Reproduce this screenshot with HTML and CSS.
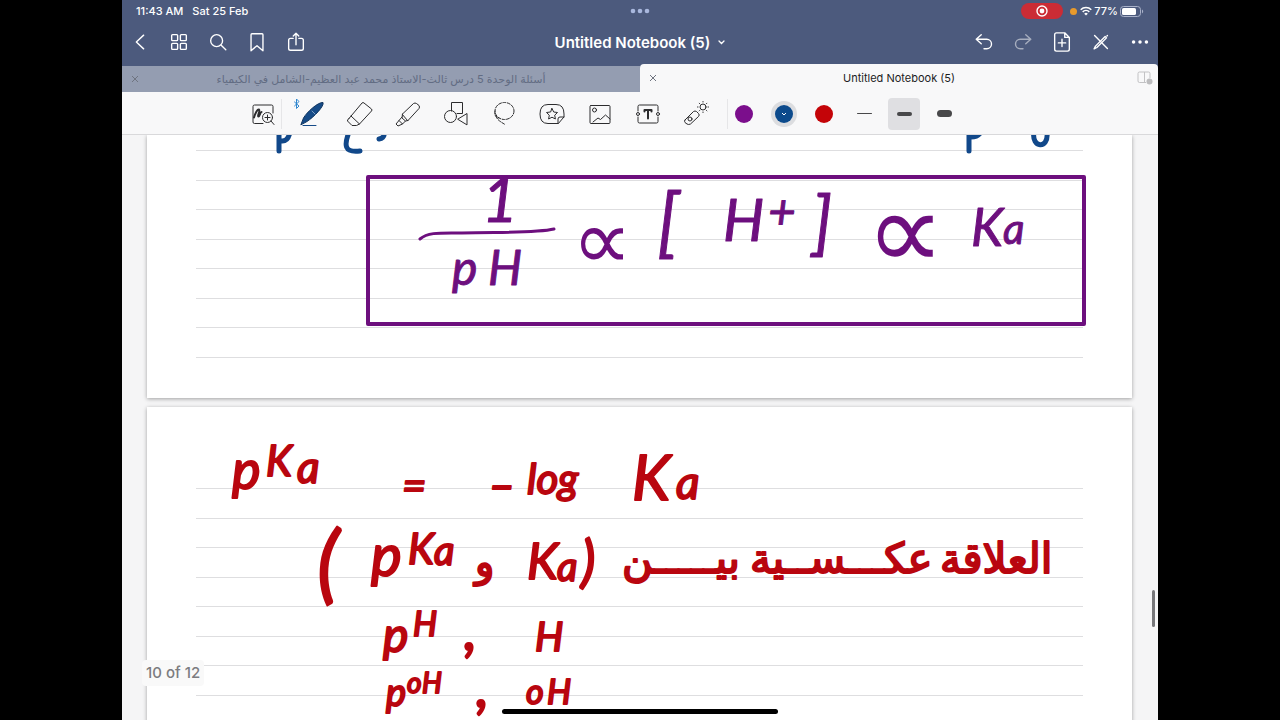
FILE: index.html
```html
<!DOCTYPE html>
<html lang="en">
<head>
  <meta charset="utf-8">
  <title>Untitled Notebook (5)</title>
  <link rel="stylesheet" href="styles.css">
</head>
<body>
  <div class="app">
    <header class="header">
      <div class="status-bar">
        <div class="status-left"><span>11:43 AM</span><span>Sat 25 Feb</span></div>
        <svg class="multitask" width="20" height="6" viewBox="0 0 20 6"><circle cx="3" cy="3" r="2.300"/><circle cx="10" cy="3" r="2.300"/><circle cx="17" cy="3" r="2.300"/></svg>
        <div class="status-right">
          <span class="recording">
            <svg width="12" height="12" viewBox="0 0 12 12"><circle cx="6" cy="6" r="5" fill="none" stroke="#fff" stroke-width="1.4"/><circle cx="6" cy="6" r="2.4" fill="#fff"/></svg>
          </span>
          <span class="mic-dot"></span>
          <svg width="12" height="10" viewBox="0 0 12 10" fill="none" stroke="#fff" stroke-width="1.6"><path d="M.7 3.7a7.6 7.6 0 0 1 10.6 0M2.7 5.8a4.8 4.8 0 0 1 6.6 0"/><path d="M6 9.6 4.2 7.7a2.6 2.6 0 0 1 3.6 0z" fill="#fff" stroke="none"/></svg>
          <span>77%</span>
          <svg width="24" height="11" viewBox="0 0 24 11"><rect x=".5" y=".5" width="20" height="10" rx="3" fill="none" stroke="#a9b1c9"/><rect x="2" y="2" width="14" height="7" rx="1.6" fill="#fff"/><path d="M22 3.6c1.6.6 1.6 3.2 0 3.8z" fill="#a9b1c9"/></svg>
        </div>
      </div>

      <nav class="nav-bar">
        <div class="nav-group">
          <button class="nav-button" aria-label="Back"><svg class="icon" viewBox="0 0 24 24"><path d="m16 4.500-8 7.500 8 7.500"/></svg></button>
          <button class="nav-button" aria-label="Thumbnails"><svg class="icon" viewBox="0 0 24 24"><rect x="4" y="4" width="6.500" height="6.500" rx="1"/><rect x="13.500" y="4" width="6.500" height="6.500" rx="1"/><rect x="4" y="13.500" width="6.500" height="6.500" rx="1"/><rect x="13.500" y="13.500" width="6.500" height="6.500" rx="1"/></svg></button>
          <button class="nav-button" aria-label="Search"><svg class="icon" viewBox="0 0 24 24"><circle cx="10.500" cy="10.500" r="6.500"/><path d="m15.500 15.500 5 5"/></svg></button>
          <button class="nav-button" aria-label="Bookmark"><svg class="icon" viewBox="0 0 24 24"><path d="M5.500 4q0-1 1-1h11q1 0 1 1v17.500L12 16l-6.500 5.500z"/></svg></button>
          <button class="nav-button" aria-label="Share"><svg class="icon" viewBox="0 0 24 24"><path d="M9 8H6Q4 8 4 10v9q0 2 2 2h12q2 0 2-2v-9q0-2-2-2h-3M12 15V2.500M9 5.500l3-3 3 3"/></svg></button>
        </div>
        <button class="doc-title">Untitled Notebook (5)
          <svg width="7" height="5" viewBox="0 0 7 5" fill="none" stroke="#fff" stroke-width="1.3" stroke-linecap="round"><path d="m1 1 2.500 2.500L6 1"/></svg>
        </button>
        <div class="nav-group nav-group-right">
          <button class="nav-button" aria-label="Undo"><svg class="icon" viewBox="0 0 24 24"><path d="m9 4-5.500 5L9 14M3.500 9H15a5.200 5.200 0 0 1 0 10.400h-3"/></svg></button>
          <button class="nav-button" aria-label="Redo" disabled><svg class="icon" viewBox="0 0 24 24"><path d="m15 4 5.500 5L15 14M20.500 9H9a5.200 5.200 0 0 0 0 10.400h3"/></svg></button>
          <button class="nav-button" aria-label="Add page"><svg class="icon" viewBox="0 0 24 24"><path d="M6 2h9l5 5v13q0 2-2 2H6q-2 0-2-2V4q0-2 2-2zM15 2v5h5M12 9v8M8 13h8"/></svg></button>
          <button class="nav-button" aria-label="Read only mode"><svg class="icon" viewBox="0 0 24 24"><path d="m5 5 14 14"/><path d="m4.500 19.500 1.500-3L16.500 6l1.500 1.500L7.500 18zM18.500 5.500l.5-.5"/></svg></button>
          <button class="nav-button" aria-label="More"><svg class="icon icon-solid" viewBox="0 0 24 24"><circle cx="5" cy="12" r="1.900"/><circle cx="12" cy="12" r="1.900"/><circle cx="19" cy="12" r="1.900"/></svg></button>
        </div>
      </nav>

      <div class="tabs">
        <div class="tab">
          <button class="tab-close" aria-label="Close tab"><svg width="8" height="8" viewBox="0 0 8 8"><path d="m1 1 6 6M7 1 1 7"/></svg></button>
          <a class="tab-title" href="#" dir="rtl" lang="ar">أسئلة الوحدة 5 درس ثالث-الاستاذ محمد عبد العظيم-الشامل في الكيمياء</a>
        </div>
        <div class="tab tab-active">
          <button class="tab-close" aria-label="Close tab"><svg width="8" height="8" viewBox="0 0 8 8"><path d="m1 1 6 6M7 1 1 7"/></svg></button>
          <a class="tab-title" href="#">Untitled Notebook (5)</a>
          <button class="tab-split" aria-label="Split view"><svg width="16" height="14" viewBox="0 0 16 14" fill="none" stroke="#c2c2c4"><path d="M9 11.500H2.500q-1.500 0-1.500-1.500V2.500Q1 1 2.500 1h9Q13 1 13 2.500V7M7.500 1v10.500"/><circle cx="12.500" cy="10.500" r="3" fill="#bcbcbe" stroke="none"/></svg></button>
        </div>
      </div>
    </header>

    <div class="toolbar">
      <button class="tool tool-zoom" aria-label="Zoom window"><svg class="tool-icon" viewBox="0 0 28 28"><path d="M14 23.500H5.500Q4 23.500 4 22V6.500Q4 5 5.500 5h17Q24 5 24 6.500V13"/><path class="thick" d="M5 17.500c1.500-5 3.500-8.500 5-8 1.500 1-2 7-.5 7S11 12 12.500 12"/><circle cx="18.500" cy="17.500" r="5"/><path d="m22 21 3 3.500M18.500 15v5M16 17.500h5"/></svg></button>
      <span class="divider"></span>
      <button class="tool tool-pen" aria-label="Pen"><svg class="tool-icon" viewBox="0 0 28 28"><path class="bluetooth" d="m-3.500 2 4.500 4-2.500 2.500V-1L1 1.500-3.500 6"/><path d="M3 24.500 5.500 18C9 12 20 2 25 2.500 26.500 6 16 17 9 21.500z" fill="#164b88" stroke="#10355f"/><path d="m14 11 3 3" stroke="#7d9ec4"/><path d="M5 25.500h13" stroke="#164b88"/></svg></button>
      <button class="tool" aria-label="Eraser"><svg class="tool-icon" viewBox="0 0 28 28"><path d="M3 18.500 16 3q1-1 2 0l7.500 6q1 1 0 2L13.500 24l-3 1.500H6L1.500 21q-.5-1.500 1.500-2.500zM5 16l8.500 8"/></svg></button>
      <button class="tool" aria-label="Highlighter"><svg class="tool-icon" viewBox="0 0 28 28"><path d="M8.500 14 19.500 3.500q1.500-1 3 0l2.500 2q1 1.500 0 3L14 20.500zM8.500 14l-.5 4 3.500 3 2.500-.5M8 17l-3 3.500L8.500 24l3-3M5 20.500l-3 3.500 2 2 4.500-2"/></svg></button>
      <button class="tool" aria-label="Shapes"><svg class="tool-icon" viewBox="0 0 28 28"><path d="M9.500 11V2.500h11v11H15"/><circle cx="8.500" cy="16.500" r="6"/><path d="m16 19 9-5.500v11z"/></svg></button>
      <button class="tool" aria-label="Lasso"><svg class="tool-icon" viewBox="0 0 28 28"><ellipse cx="14.500" cy="11" rx="9.500" ry="8.500" stroke-dasharray="3 1.500"/><path stroke-dasharray="3 1.500" d="M5 11c-1 4 1 7 4 7M6 16c1 4 5 6 9 8.500"/></svg></button>
      <button class="tool" aria-label="Elements"><svg class="tool-icon" viewBox="0 0 28 28"><path d="M20 23.500H10q-8 0-8-9.500t8-9.500h8q8 0 8 9.500v2.500zM20 23.500V19q0-2 2-2h4"/><path d="m14 8.500 1.700 3.500 3.800.5-2.800 2.700.7 3.800-3.400-1.800-3.400 1.800.7-3.800-2.800-2.700 3.800-.5z"/></svg></button>
      <button class="tool" aria-label="Image"><svg class="tool-icon" viewBox="0 0 28 28"><rect x="4" y="5.500" width="20" height="18" rx="1"/><circle cx="8.500" cy="10" r="2"/><path d="m7 22 5-4 2.500 1.500 5-4.500 4.500 4"/></svg></button>
      <button class="tool" aria-label="Text"><svg class="tool-icon" viewBox="0 0 28 28"><path d="M4 11V6.500Q4 5 5.500 5h17Q24 5 24 6.500V11M24 17v4.500q0 1.500-1.500 1.500h-17Q4 23 4 21.500V17"/><circle cx="4" cy="14" r="1.500"/><circle cx="24" cy="14" r="1.500"/><path class="thick" d="M10.500 11.500V10h7v1.500M14 10v8.500"/></svg></button>
      <button class="tool" aria-label="Laser pointer"><svg class="tool-icon" viewBox="0 0 28 28"><path d="m3 20 8.500-8.500q1.500-1 3 0l2 2q1.500 1.500 0 3L8.500 24q-2 1-3.500 0l-2-1.500q-1-1 0-2.500z"/><circle cx="8" cy="19" r="2"/><circle cx="21" cy="7" r="3"/><path d="M21 1.500v.5M21 12v.5M15.500 7h.5M26 7h.5M17.200 3.200l.4.400M24.500 10.500l.4.400M24.900 3.200l-.4.400M17.600 10.500l-.4.400"/></svg></button>
      <span class="divider divider-end"></span>
      <div class="presets">
        <button class="preset" aria-label="Purple"><span class="swatch swatch-purple"></span></button>
        <button class="preset" aria-label="Blue"><span class="swatch swatch-blue"><svg width="6" height="4" viewBox="0 0 6 4" fill="none" stroke="#fff"><path d="m1 1 2 2 2-2"/></svg></span></button>
        <button class="preset" aria-label="Red"><span class="swatch swatch-red"></span></button>
        <button class="preset" aria-label="Thin stroke"><span class="stroke stroke-thin"></span></button>
        <button class="preset preset-selected" aria-label="Medium stroke"><span class="stroke stroke-medium"></span></button>
        <button class="preset" aria-label="Thick stroke"><span class="stroke stroke-thick"></span></button>
      </div>
    </div>

    <main class="canvas">
      <section class="page">
        <svg class="sheet" viewBox="0 0 985 263">
          <path class="rules" d="M49 15h887M49 45h887M49 74h887M49 104h887M49 133h887M49 163h887M49 192h887M49 222h887"/>
          <!-- tails of the line above, scrolled under the toolbar -->
          <path class="line line-blue" d="M132-3v19M143-3q-2 10-9 9M202-3c-5 13-5 21 11 19M237-3q1 6-5 7M822-3v19M834-3q-3 5-10 5M887-3c-3 16 15 18 13 0"/>
          <g class="ink purple">
            <rect class="line" x="221" y="42" width="716" height="147"/>
            <text x="335" y="87" font-size="62">1</text>
            <path class="line line-thin" d="M273 104c8-7 20-6 42-6 45-1 75 0 92-4"/>
            <text x="305 341" y="150" font-size="48">pH</text>
            <text class="symbol" x="425" y="134" font-size="84">∝</text>
            <text x="510" y="113" font-size="76">[</text>
            <text x="576" y="106" font-size="58">H</text>
            <text x="621" y="94" font-size="48">+</text>
            <text x="665" y="112" font-size="70">]</text>
            <text class="symbol" x="719" y="134" font-size="110">∝</text>
            <text x="824" y="111" font-size="52">K</text>
            <text x="856" y="109" font-size="42">a</text>
          </g>
        </svg>
      </section>

      <section class="page">
        <svg class="sheet" viewBox="0 0 985 420">
          <path class="rules" d="M49 81h887M49 111h887M49 140h887M49 170h887M49 199h887M49 229h887M49 258h887M49 288h887"/>
          <g class="ink red">
            <text x="85" y="82" font-size="54">p</text>
            <text x="119" y="69" font-size="42">K</text>
            <text x="150" y="76" font-size="44">a</text>
            <text x="255" y="93" font-size="42">=</text>
            <text x="341" y="95" font-size="48">–</text>
            <text x="380" y="87" font-size="42">log</text>
            <text x="485" y="93" font-size="62">K</text>
            <text x="529" y="92" font-size="46">a</text>

            <text x="170" y="186" font-size="86">(</text>
            <text x="224" y="169" font-size="58">p</text>
            <text x="261" y="157" font-size="42">K</text>
            <text x="287" y="158" font-size="40">a</text>
            <text class="arabic" x="328" y="169" font-size="40">و</text>
            <text x="380" y="172" font-size="50">K</text>
            <text x="410" y="174" font-size="40">a</text>
            <text x="434" y="174" font-size="56">)</text>
            <text class="arabic" x="475" y="166" font-size="42">بيـــــن</text>
            <text class="arabic" x="603" y="166" font-size="42">عكـــســية</text>
            <text class="arabic" x="793" y="166" font-size="42">العلاقة</text>

            <text x="236" y="245" font-size="48">p</text>
            <text x="266" y="229" font-size="34">H</text>
            <text x="317" y="243" font-size="60">,</text>
            <text x="388" y="244" font-size="40">H</text>

            <text x="239" y="299" font-size="38">p</text>
            <text x="260 275" y="286" font-size="28">oH</text>
            <text x="329" y="300" font-size="60">,</text>
            <text x="379 400" y="297" font-size="34">oH</text>
          </g>
        </svg>
      </section>

      <div class="page-count">10 of 12</div>
      <div class="scroll-thumb"></div>
      <div class="home-indicator"></div>
    </main>
  </div>
</body>
</html>
```

FILE: styles.css
```css
* {
  box-sizing: border-box;
}
body {
  margin: 0;
  background-color: #000;
  font-family: Inter, "DejaVu Sans", sans-serif;
  font-size: 11px;
}
button {
  display: flex;
  align-items: center;
  justify-content: center;
  padding: 0;
  border: none;
  background: none;
  color: inherit;
  font: inherit;
}
svg {
  flex: none;
}
.app {
  display: flex;
  flex-direction: column;
  height: 100vh;
  margin: 0 122px;
  background-color: #f5f5f6;
}

/* status bar and navigation */
.header {
  background-color: #4c5a7d;
  color: #fff;
}
.status-bar,
.nav-bar {
  display: grid;
  grid-template-columns: 1fr auto 1fr;
  align-items: center;
}
.status-bar {
  height: 22px;
  padding: 0 14px;
  font-weight: 500;
}
.status-left {
  display: flex;
  gap: 9px;
}
.multitask {
  fill: #a9b8de;
}
.status-right {
  display: flex;
  align-items: center;
  justify-content: flex-end;
  gap: 2px;
}
.recording {
  display: flex;
  align-items: center;
  justify-content: center;
  width: 42px;
  height: 16px;
  margin-right: 5px;
  border-radius: 8px;
  background-color: #cb2c35;
}
.mic-dot {
  width: 7px;
  height: 7px;
  margin-right: 1px;
  border-radius: 50%;
  background-color: #e89a2c;
}
.nav-bar {
  height: 42px;
  padding-bottom: 2px;
}
.nav-group {
  display: flex;
  gap: 3px;
}
.nav-group-right {
  justify-content: flex-end;
}
.nav-button {
  width: 36px;
  height: 40px;
}
.nav-button:disabled {
  opacity: 0.5;
}
.icon {
  width: 22px;
  height: 22px;
  fill: none;
  stroke: #fff;
  stroke-width: 1.5;
  stroke-linecap: round;
  stroke-linejoin: round;
}
.icon-solid {
  fill: #fff;
  stroke: none;
}
.doc-title {
  gap: 8px;
  font-size: 15px;
  font-weight: 600;
}

/* document tabs */
.tabs {
  display: grid;
  grid-template-columns: 1fr 1fr;
  align-items: end;
}
.tab {
  display: grid;
  grid-template-columns: 26px 1fr 26px;
  align-items: center;
  height: 26px;
  background-color: #949db1;
  color: #626c83;
}
.tab-active {
  height: 28px;
  border-radius: 4px 4px 0 0;
  background-color: #f8f8f9;
  color: #1c1c1e;
}
.tab-title {
  color: inherit;
  text-align: center;
  text-decoration: none;
  white-space: nowrap;
}
.tab-close {
  height: 26px;
}
.tab-close path {
  stroke: #6f7480;
}

/* drawing tools */
.toolbar {
  display: flex;
  align-items: center;
  justify-content: center;
  height: 43px;
  flex: none;
  padding: 1px 75px 0 0;
  border-bottom: 1px solid #d9d9db;
  background-color: #f8f8f9;
}
.tool {
  width: 48px;
  height: 40px;
}
.tool-zoom {
  width: 36px;
}
.tool-icon {
  width: 28px;
  height: 28px;
  overflow: visible;
  fill: none;
  stroke: #2c2c2e;
  stroke-linecap: round;
  stroke-linejoin: round;
}
.tool-icon .thick {
  stroke-width: 2;
}
.tool-icon .bluetooth {
  stroke: #2e86cf;
}
.divider {
  width: 1px;
  height: 30px;
  margin-right: 6px;
  background-color: #e6e6e8;
}
.divider-end {
  margin: 0 0 0 7px;
}
.presets {
  display: flex;
  gap: 8px;
}
.preset {
  width: 32px;
  height: 32px;
  border-radius: 4px;
}
.preset-selected {
  background-color: #dfdfe2;
}
.swatch {
  display: flex;
  align-items: center;
  justify-content: center;
  width: 18px;
  height: 18px;
  border-radius: 50%;
}
.swatch-purple {
  background-color: #7b0e8c;
}
.swatch-blue {
  background-color: #0c4a8c;
  box-shadow: 0 0 0 4px #dcdde0;
}
.swatch-red {
  background-color: #c40408;
}
.stroke {
  width: 15px;
  border-radius: 4px;
  background-color: #48484a;
}
.stroke-thin {
  height: 1px;
}
.stroke-medium {
  height: 4px;
}
.stroke-thick {
  height: 7px;
}

/* notebook pages */
.canvas {
  position: relative;
  display: flex;
  flex: 1;
  flex-direction: column;
  gap: 9px;
  min-height: 0;
  overflow: hidden;
  padding: 0 26px 0 25px;
}
.page {
  flex: none;
  background-color: #fff;
  box-shadow: 0 1px 4px rgba(0, 0, 0, 0.35);
}
.sheet {
  display: block;
  width: 100%;
  overflow: hidden;
}
.rules {
  fill: none;
  stroke: #dedee0;
  shape-rendering: crispEdges;
}
.ink {
  font-family: Lato, "DejaVu Sans", sans-serif;
  font-style: italic;
  stroke-linejoin: round;
}
.ink .symbol,
.ink .arabic {
  font-family: "DejaVu Sans", sans-serif;
  font-style: normal;
}
.ink .symbol {
  stroke: none;
}
.purple {
  fill: #6d0f7e;
  stroke: #6d0f7e;
}
.red {
  fill: #b9060f;
  stroke: #b9060f;
  stroke-width: 2;
}
.line {
  fill: none;
  stroke: #6d0f7e;
  stroke-width: 4;
  stroke-linecap: round;
  stroke-linejoin: round;
}
.line-thin {
  stroke-width: 3;
}
.line-blue {
  stroke: #11488a;
  stroke-width: 5;
}

/* overlays on the canvas */
.page-count {
  position: absolute;
  bottom: 34px;
  left: 20px;
  padding: 4px;
  border-radius: 4px;
  background-color: #f9f9f9;
  color: #7c7c80;
  font-size: 15px;
  font-weight: 500;
  line-height: 18px;
}
.scroll-thumb {
  position: absolute;
  right: 3px;
  bottom: 93px;
  width: 3px;
  height: 37px;
  border-radius: 2px;
  background-color: #77777a;
}
.home-indicator {
  position: absolute;
  bottom: 6px;
  left: 50%;
  width: 276px;
  height: 5px;
  border-radius: 3px;
  background-color: #000;
  transform: translateX(-50%);
}
```
